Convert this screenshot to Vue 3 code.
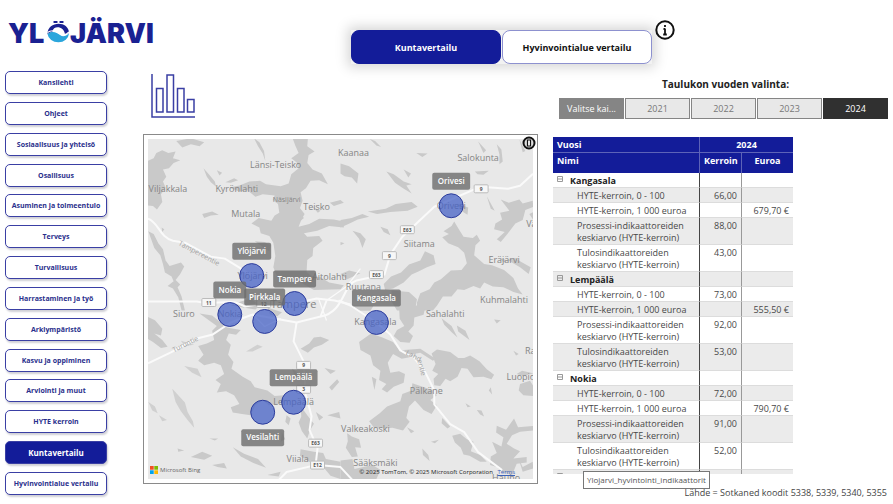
<script setup>
import { ref } from 'vue'

const pages = [
  'Kansilehti', 'Ohjeet', 'Sosiaalisuus ja yhtelsö', 'Osallisuus', 'Asuminen ja toimeentulo',
  'Terveys', 'Turvallisuus', 'Harrastaminen ja työ', 'Arkiympäristö', 'Kasvu ja oppiminen',
  'Arviointi ja muut', 'HYTE kerroin', 'Kuntavertailu', 'Hyvinvointialue vertailu',
]
const activePage = ref('Kuntavertailu')

const years = ['Valitse kai...', '2021', '2022', '2023', '2024']
const activeYear = ref('2024')

const makeGroup = (name, score, euros, process, result) => ({
  name,
  rows: [
    { label: ['HYTE-kerroin, 0 - 100'], score },
    { label: ['HYTE-kerroin, 1 000 euroa'], euros },
    { label: ['Prosessi-indikaattoreiden', 'keskiarvo (HYTE-kerroin)'], score: process },
    { label: ['Tulosindikaattoreiden', 'keskiarvo (HYTE-kerroin)'], score: result },
  ],
})
const groups = [
  makeGroup('Kangasala', '66,00', '679,70 €', '88,00', '43,00'),
  makeGroup('Lempäälä', '73,00', '555,50 €', '92,00', '53,00'),
  makeGroup('Nokia', '72,00', '790,70 €', '91,00', '52,00'),
]

const places = [
  ['Kaanaa', 353, 155], ['Länsi-Teisko', 275, 167], ['Salokunta', 478, 160], ['Viljakkala', 167, 191],
  ['Kyrönlahti', 236, 191], ['Teisko', 316, 209], ['Mutala', 245, 216], ['Siitama', 419, 246],
  ['Eräjärvi', 504, 262], ['Aitolahti', 329, 279], ['Ruutana', 363, 289], ['Kuhmalahti', 504, 302],
  ['Siuro', 183, 317], ['Sahalahti', 445, 317], ['Pälkäne', 426, 394], ['Valkeakoski', 365, 432],
  ['Viiala', 297, 462], ['Sääksmäki', 375, 466], ['Hauho', 506, 481], ['Luopioinen', 530, 380],
  ['Rautajärvi', 546, 354], ['Väihö', 538, 226],
]
const shields = [
  ['9', 481, 188], ['E63', 407, 229], ['9', 389, 255], ['E63', 376, 274], ['11', 208, 302],
  ['12', 263, 303], ['9', 303, 365], ['3', 303, 389], ['E63', 315, 443], ['E12', 317, 465],
]
const cities = [
  { name: 'Orivesi', x: 451, y: 205, lx: 451, ly: 180, w: 38, tx: 451, ty: 208 },
  { name: 'Ylöjärvi', x: 251, y: 275, lx: 251, ly: 250, w: 39, tx: 252, ty: 278 },
  { name: 'Tampere', x: 294, y: 303, lx: 294, ly: 278, w: 43, tx: 293, ty: 307, big: true },
  { name: 'Nokia', x: 229, y: 314, lx: 229, ly: 289, w: 33, tx: 229, ty: 317 },
  { name: 'Pirkkala', x: 264, y: 321, lx: 264, ly: 296, w: 41, tx: 264, ty: 325, hidden: true },
  { name: 'Kangasala', x: 376, y: 322, lx: 376, ly: 297, w: 49, tx: 375, ty: 325 },
  { name: 'Lempäälä', x: 293, y: 402, lx: 293, ly: 377, w: 48, tx: 293, ty: 405 },
  { name: 'Vesilahti', x: 262, y: 412, lx: 262, ly: 437, w: 43, tx: 262, ty: 416, hidden: true },
]
</script>

<template>
  <div class="page">
    <header class="top">
      <svg class="logo" viewBox="0 0 152 28" role="img" aria-label="Ylöjärvi">
        <g class="wordmark">
          <text x="0" y="23">YL</text>
          <text x="62" y="23">JÄRVI</text>
        </g>
        <path d="M39.500 14 C39.500 0.500 61 0.500 61 13 L57 14.500 C56 5.500 45 5.500 44.500 11.500 Z" fill="#1a2192" />
        <path d="M39.500 14 C44 10 49 12.500 52 15 C55 17.500 58 16 61 13.500 A10.800 9.500 0 0 1 39.500 14 Z" fill="#2ba6dc" />
        <path d="M39.500 12.500 C44 9 49 11.500 52 13.500 C55 15.500 58 15 61 12" fill="none" stroke="#fff" stroke-width="1.200" />
        <rect x="45.500" y="1" width="4" height="2" rx=".5" fill="#1a2192" />
        <rect x="51.500" y="1" width="4" height="2" rx=".5" fill="#1a2192" />
      </svg>
      <div class="tabs">
        <button type="button" class="tab active">Kuntavertailu</button>
        <button type="button" class="tab">Hyvinvointialue vertailu</button>
      </div>
      <button type="button" class="info" aria-label="Info">
        <svg viewBox="0 0 20 20">
          <circle cx="10" cy="10" r="8.700" fill="#fff" stroke="#111" stroke-width="2" />
          <path d="M10 8.500V14M8.500 9H10M8.200 14.500H11.800M10 5V7" stroke="#111" stroke-width="1.800" />
        </svg>
      </button>
    </header>

    <div class="body">
      <nav class="side">
        <button
          v-for="p in pages" :key="p" type="button" class="nav"
          :class="{ active: p === activePage }" @click="activePage = p"
        >{{ p }}</button>
      </nav>

      <main class="center">
        <svg class="bars" viewBox="0 0 46 46" fill="none" stroke="#3a3fa4" stroke-width="1.500">
          <path d="M2 1V44H45" />
          <path d="M6.500 15.500H13V39H6.500ZM17 2H23.500V39H17ZM27.500 15.500H34V39H27.500ZM37.500 26.500H44V39H37.500Z" />
        </svg>
        <div class="frame">
          <svg class="map" viewBox="147 137 386 343" preserveAspectRatio="xMidYMid slice" role="img" aria-label="Kuntakartta">
            <rect x="147" y="137" width="386" height="343" fill="#e8e8e8" />
            <g class="water">
              <g transform="translate(140 130) scale(.33333)">
                <path d="M20 90L38 82 46 66 64 58 82 66 104 62 96 82 118 88 98 96 84 112 66 116 76 138 66 152 74 170 60 190 64 214 48 236 36 226 20 224Z" />
                <path d="M106 30L150 22 190 34 176 46 150 40 124 50ZM340 22L352 46 366 68 374 90 370 60 356 34Z" />
                <path d="M456 22L502 22 500 46 522 62 504 72 500 96 516 116 544 128 562 160 536 148 510 150 496 172 480 184 486 210 478 232 492 250 482 268 474 288 506 280 536 264 580 266 610 272 610 290 566 286 530 300 490 308 500 318 536 316 546 330 518 352 516 376 500 388 498 424 512 436 540 440 566 456 610 464 600 476 520 478 470 450 410 440 398 410 404 376 398 336 386 316 360 308 356 290 332 278 354 262 392 270 402 254 416 246 412 220 396 208 402 194 366 190 344 198 320 178 294 182 266 170 296 164 326 152 358 150 376 160 420 166 444 158 452 130 474 112 470 96 452 82 474 66 464 44Z" />
                <path d="M188 112L204 130 222 152 226 168 210 154 198 138ZM228 118L244 126 236 134ZM254 154L280 142 292 148 270 156ZM184 250L214 242 234 252 210 254 190 262ZM342 332L372 334 390 344 386 362 368 350Z" />
                <path d="M22 302L38 310 52 338 66 356 74 390 86 406 120 396 130 408 118 430 104 448 118 462 110 470 122 498 132 540 122 540 112 500 96 474 80 466 98 452 92 438 72 426 66 400 58 374 40 352Z" />
                <path d="M62 290L70 296 64 304ZM568 216L600 208 610 216 580 226ZM480 250L490 262 480 270ZM516 228L540 240 532 246Z" />
              </g>
              <g transform="translate(340 130) scale(.33333)">
                <path d="M0 98L26 106 54 128 50 158 34 140 12 136 0 128ZM138 122L160 130 190 152 214 160 198 164 214 188 188 172 164 156ZM190 116L212 128 204 140ZM82 242L136 234 166 220 214 214 232 228 202 240 150 244 110 250Z" />
                <path d="M0 268L34 262 66 250 86 258 52 266 24 280 0 290ZM36 300L60 308 76 326 66 352 56 324ZM120 288L142 296 150 314 130 304ZM0 334L12 338 0 344ZM88 24L104 30 122 48 108 44ZM228 66L262 68 246 78ZM414 32L438 58 430 66ZM470 40L484 56 488 92 478 100 478 70ZM404 122L446 120 430 132 412 130ZM538 26L556 60 548 64Z" />
                <path d="M440 196L464 240 452 234ZM482 206L506 216 538 206 548 218 578 210 580 228 556 238 548 268 526 278 502 310 482 334 470 326 494 304 462 296 466 278 486 266 480 246 508 240Z" />
                <path d="M334 286L342 272 356 296 370 318 398 322 410 312 420 330 406 344 402 374 432 400 456 404 492 418 520 442 534 474 548 492 520 484 490 470 458 468 432 456 420 474 400 466 372 478 352 476 334 498 308 498 290 526 278 540 230 540 230 516 240 488 268 476 282 456 302 446 332 420 364 418 380 398 372 366 354 350 324 338 306 320 326 310 310 302Z" />
                <path d="M254 362L280 374 286 400 260 410 236 422 214 432 190 456 158 474 134 478 130 460 152 438 182 426 206 402 240 390ZM502 388L526 382 540 392 572 410 566 430 540 410ZM350 218L384 230 382 252 366 242ZM568 250L580 244V268ZM480 382L504 390 490 396Z" />
                <path d="M154 480L206 484 230 506 224 540 170 540 152 510ZM0 430L26 420 60 428 20 446Z" />
              </g>
              <g transform="translate(140 305) scale(.33333)">
                <path d="M20 34L42 44 64 70 60 90 40 84 64 104 80 124 60 128 36 110 20 100Z" />
                <path d="M176 24L214 30 258 66 300 74 286 88 264 84 256 104 270 118 262 148 278 170 272 190 306 214 330 228 342 246 380 256 402 272 430 270 426 294 384 300 366 284 344 300 330 330 304 326 276 322 270 306 296 296 280 270 256 258 228 262 240 236 224 224 250 206 240 180 220 172 190 180 172 166 188 148 172 122 198 114 220 104 214 76 228 62Z" />
                <path d="M130 182L170 190 182 216 154 202ZM94 250L112 270 132 292 140 320 156 348 160 368 140 344 120 318 104 290ZM22 290L42 304 50 324 34 316ZM54 330L78 344 64 348ZM120 106L160 118 132 122ZM316 138L350 118 366 124 336 138Z" fill-opacity=".8" />
                <path d="M480 130L506 114 520 96 540 94 566 104 544 118 520 126 502 142ZM454 190L474 204 466 222ZM552 188L586 196 570 206ZM566 246L590 222 596 230 574 256ZM526 320L548 336 536 346ZM560 330L596 320 600 340ZM438 330L450 340 444 360 434 350ZM424 382L434 402 420 410Z" />
                <path d="M480 302L500 330 520 356 508 376 500 400 484 378 474 352 482 334ZM276 426L310 446 352 462 376 488 338 474 300 454ZM150 456L184 440 214 452 190 464ZM110 430L130 436 112 440ZM206 400L232 400 222 406ZM214 480L250 474 258 490 230 486Z" />
                <path d="M480 432L520 440 548 444 556 462 600 470 600 522 570 512 548 486 512 474 478 452ZM380 510L420 500 414 514ZM270 0L344 12 358 0 330 -20 300 -12ZM380 6L424 20 410 32 388 28Z" />
              </g>
              <g transform="translate(340 305) scale(.33333)">
                <path d="M176 0L256 0 250 28 222 36 220 60 204 78 218 92 208 112 180 110 160 92 170 74 192 62 178 40ZM40 0H100L90 16 50 16Z" />
                <path d="M56 110L92 84 126 96 158 110 176 132 206 138 208 156 184 160 158 146 142 172 150 202 176 198 194 206 190 232 160 244 140 262 124 252 138 236 116 224 120 196 98 180 90 150 60 134ZM94 214L108 222 102 254Z" />
                <path d="M216 234L276 254 290 270 270 284 290 300 274 326 250 314 224 286 206 304 198 338 208 350 188 376 156 368 130 370 100 366 86 348 118 324 140 304 180 288 186 266 214 256Z" />
                <path d="M274 144L290 132 330 140 354 158 372 158 390 150 418 168 440 192 462 208 454 222 430 214 400 216 382 190 364 188 352 214 330 228 316 220 300 242 282 240 280 220 294 206 276 196 286 176Z" />
                <path d="M190 134L240 130 286 160 278 166 240 142 208 148ZM304 38L334 62 352 96 336 82 312 58ZM350 60L376 76 388 104 372 92 354 78ZM462 42L482 44 470 54ZM520 136L536 146 528 150Z" />
                <path d="M452 246L456 268 446 256ZM410 314L424 316 432 334 420 328ZM376 294L392 304 382 306ZM306 338L330 364 322 370 304 354ZM246 430L264 450 268 468 248 450ZM272 410L296 404 284 414Z" />
                <path d="M336 392L360 386 380 402 400 410 392 438 420 450 440 470 420 470 388 452 370 448 362 428 344 412Z" />
                <path d="M470 362L498 374 522 340 534 366 580 362 580 376 540 380 516 390 500 416 522 430 540 438 520 460 560 456 560 472 530 476 516 510 484 500 470 486 450 480 452 454 470 444 456 410 484 424 490 396 468 382ZM536 462L548 486 578 470 580 490 548 500ZM540 236L570 226 580 242V272L550 270 536 256ZM530 206L546 196 580 204 550 212Z" />
                <path d="M20 384L34 394 56 402 62 428 44 426 52 454 34 456 16 428 22 408ZM0 466L36 462 42 492 96 480 120 494 108 522H0ZM200 366L222 378 212 384Z" />
              </g>
            </g>
            <g class="roads">
              <path d="M147 218C158 222 158 236 172 240L184 242 210 256 224 258 242 269 251 275" />
              <path d="M147 301H196C214 306 228 296 244 306L263 303 294 303 316 298 334 300 350 304" />
              <path d="M147 363L170 352 196 338 212 334 230 322 252 314 274 318 296 322 320 316 326 300" />
              <path d="M296 322L293 341 303 361 305 394 311 416 309 430 317 448 315 465 286 472 278 480" />
              <path d="M320 316C344 312 342 284 356 280L384 274 390 254 402 236 434 206 480 186 508 188 520 185 533 173" />
              <path d="M317 465L340 467 352 480M338 300L350 305 376 322 390 334 400 350 414 358 424 370 434 390 434 404 450 424 464 432 478 452 502 470" />
              <path d="M252 314L264 326 280 318M326 300L346 286 360 268M318 298L326 320" stroke-width="1.200" />
            </g>
            <g class="road-names">
              <text x="177" y="244" transform="rotate(28 177 244)">Tampereentie</text>
              <text x="173" y="352" transform="rotate(-26 173 352)">Turuntie</text>
              <text x="405" y="354" transform="rotate(28 405 354)">Lahd</text>
              <text x="417" y="360" transform="rotate(75 417 360)">entie</text>
            </g>
            <g class="shields">
              <template v-for="([n, x, y], i) in shields" :key="i">
                <rect :x="x - 7" :y="y - 4" width="14" height="8" rx="1" />
                <text :x="x" :y="y + 2">{{ n }}</text>
              </template>
            </g>
            <g class="places">
              <text v-for="[n, x, y] in places" :key="n" :x="x" :y="y">{{ n }}</text>
              <text class="lake" x="286" y="201">Näsijärvi</text>
              <template v-for="c in cities" :key="c.name">
                <text v-if="!c.hidden" :class="{ big: c.big }" :x="c.tx" :y="c.ty">{{ c.name }}</text>
              </template>
            </g>
            <g class="markers">
              <circle v-for="c in cities" :key="c.name" :cx="c.x" :cy="c.y" r="12" />
            </g>
            <g class="tags">
              <template v-for="c in cities" :key="c.name">
                <rect :x="c.lx - c.w / 2" :y="c.ly - 8" :width="c.w" height="17" rx="2" />
                <text :x="c.lx" :y="c.ly + 3">{{ c.name }}</text>
              </template>
            </g>
          </svg>
          <div class="bing">
            <svg viewBox="0 0 8 8">
              <path fill="#f25022" d="M0 0h3.700v3.700H0z" /><path fill="#7fba00" d="M4.300 0H8v3.700H4.300z" />
              <path fill="#00a4ef" d="M0 4.300h3.700V8H0z" /><path fill="#ffb900" d="M4.300 4.300H8V8H4.300z" />
            </svg>
            <span>Microsoft Bing</span>
          </div>
          <div class="copyright">© 2025 TomTom, © 2025 Microsoft Corporation <a href="#terms">Terms</a></div>
          <button type="button" class="map-info" aria-label="Kartan tiedot">
            <svg viewBox="0 0 14 14">
              <circle cx="7" cy="7" r="5.500" fill="#ddd" stroke="#111" stroke-width="2" />
              <path d="M5.500 4V10H8.500V4Z" fill="#fff" stroke="#111" stroke-width="1.200" />
            </svg>
          </button>
        </div>
      </main>

      <section class="right">
        <h2>Taulukon vuoden valinta:</h2>
        <div class="years">
          <button
            v-for="(y, i) in years" :key="y" type="button"
            :class="{ all: i === 0, active: y === activeYear }" @click="activeYear = y"
          >{{ y }}</button>
        </div>
        <div class="scroll">
          <table>
            <colgroup><col class="c-name"><col class="c-score"><col class="c-euro"></colgroup>
            <thead>
              <tr><th class="left">Vuosi</th><th colspan="2">2024</th></tr>
              <tr class="second"><th class="left">Nimi</th><th>Kerroin</th><th>Euroa</th></tr>
            </thead>
            <tbody>
              <template v-for="g in groups" :key="g.name">
                <tr>
                  <th scope="row" class="group">
                    <button type="button" class="toggle" :aria-label="g.name">
                      <svg viewBox="0 0 7 7" fill="none" stroke="#999"><path d="M.5 .5H5.500V5.500H.5ZM1 3H5" /></svg>
                    </button>{{ g.name }}
                  </th>
                  <td></td><td></td>
                </tr>
                <tr v-for="(r, i) in g.rows" :key="i">
                  <td class="label"><div v-for="l in r.label" :key="l">{{ l }}</div></td>
                  <td>{{ r.score }}</td>
                  <td>{{ r.euros }}</td>
                </tr>
              </template>
              <tr>
                <th scope="row" class="group">
                  <button type="button" class="toggle" aria-label="Laajenna">
                    <svg viewBox="0 0 7 7" fill="none" stroke="#999"><path d="M.5 .5H5.500V5.500H.5ZM1 3H5" /></svg>
                  </button>
                </th>
                <td></td><td></td>
              </tr>
            </tbody>
          </table>
        </div>
        <p class="source">Lähde = Sotkaned koodit 5338, 5339, 5340, 5355</p>
        <div class="tooltip" role="tooltip">Ylojarvi_hyvintointi_indikaattorit</div>
      </section>
    </div>
  </div>
</template>

<style>
body { background: #fff; }
</style>

<style scoped>
.page {
  height: 100vh;
  min-height: 500px;
  display: flex;
  flex-direction: column;
  font-family: "Open Sans", "Noto Sans", sans-serif;
  font-size: 9px;
  line-height: 12px;
  color: #333;
  box-sizing: border-box;
}
.page * { box-sizing: border-box; }
button { font-family: inherit; margin: 0; padding: 0; cursor: pointer; white-space: nowrap; }
svg { display: block; }

.top { display: flex; align-items: flex-start; padding: 20px 0 0 8px; height: 71px; flex: none; }
.logo { width: 152px; height: 28px; margin-right: 191px; overflow: visible; }
.wordmark { font: 900 27px Inter, sans-serif; fill: #1a2192; }
.tabs { display: flex; gap: 1px; margin-top: 10px; box-shadow: 0 0 12px 3px #d4d4d4; background: #f2f2f2; }
.tab { width: 150px; height: 34px; border: 1px solid #8d91cf; border-radius: 8px; background: #fff; color: #111; font-size: 9px; font-weight: 700; }
.tab.active { background: #131c99; border-color: #131c99; color: #fff; }
.info { width: 20px; height: 20px; margin-left: 3px; border: 0; background: none; }

.body { flex: 1; min-height: 0; display: grid; grid-template-columns: 123px minmax(0, 395fr) minmax(0, 335fr); column-gap: 15px; padding: 0 5px; }

.side { display: flex; flex-direction: column; justify-content: space-between; padding-bottom: 9px; width: 102px; }
.nav { height: 23px; border: 1px solid #3a3fa4; border-radius: 5px; background: #fff; color: #2a2f8c; font-size: 7px; font-weight: 700; box-shadow: 1px 2px 2px #d0d0d6; }
.nav.active { background: #131c99; color: #fff; font-size: 8px; }

.center { display: flex; flex-direction: column; padding: 2px 0 20px; min-height: 0; }
.bars { width: 46px; height: 46px; margin: 0 0 15px 7px; flex: none; }
.frame { position: relative; flex: 1; min-height: 0; border: 1px solid #8a8a8a; padding: 4px; }
.map { width: 100%; height: 100%; }
.water { fill: #c9c9c9; }
.roads { fill: none; stroke: #fafafa; stroke-width: 2; stroke-linejoin: round; }
.road-names { font-size: 7px; fill: #a0a0a0; }
.shields rect { fill: #f7f7f7; stroke: #bbb; }
.shields text { font-size: 5px; font-weight: 700; fill: #555; text-anchor: middle; }
.places text { font-size: 9px; fill: #858585; text-anchor: middle; }
.places .lake { font-size: 7px; }
.places .big { font-size: 11px; }
.markers circle { fill: #4661c6; fill-opacity: .75; stroke: #2c3c9c; stroke-width: 1; }
.tags rect { fill: #6b6b6b; fill-opacity: .8; }
.tags text { font-size: 8px; font-weight: 600; fill: #fff; text-anchor: middle; }
.bing { position: absolute; left: 6px; bottom: 9px; display: flex; align-items: center; gap: 2px; font-size: 6px; line-height: 8px; color: #666; }
.bing svg { width: 8px; height: 8px; }
.copyright { position: absolute; right: 22px; bottom: 6px; font-size: 6px; line-height: 10px; color: #222; white-space: nowrap; }
.copyright a { color: #3d63b8; margin-left: 3px; }
.map-info { position: absolute; top: 1px; right: 1px; width: 14px; height: 14px; border: 0; background: none; }

.right { position: relative; display: flex; flex-direction: column; min-height: 0; padding-bottom: 5px; }
h2 { margin: 6px 0 0; padding-left: 10px; font-size: 10px; line-height: 14px; font-weight: 700; text-align: center; color: #222; }
.years { display: grid; grid-template-columns: repeat(5, minmax(0, 1fr)); gap: 1px; margin: 7px 0 18px 6px; }
.years button { height: 21px; border: 1px solid #858585; background: #e8e8e8; color: #777; font-size: 9px; }
.years .all { background: #858585; color: #fff; }
.years .active { background: #303030; border-color: #303030; color: #fff; }

.scroll { flex: 1; min-height: 0; overflow: hidden; }
table { border-collapse: separate; border-spacing: 0; table-layout: fixed; width: 240px; }
.c-name { width: 147px; }
.c-score { width: 42px; }
.c-euro { width: 51px; }
thead th { background: #131c99; color: #fff; height: 16px; padding: 2px 4px 1px; font-weight: 700; border-bottom: 1px solid #5d63b8; text-align: center; }
thead th:not(:last-child) { border-right: 1px solid #5d63b8; }
thead .left { text-align: left; }
thead .second th { height: 20px; padding: 1px 4px 6px; border-bottom: 0; }
tbody th, tbody td { height: 15px; padding: 2px 4px 0; border-bottom: 1px solid #dcdcdc; text-align: right; vertical-align: top; white-space: nowrap; color: #484848; }
tbody tr:nth-child(even) > * { background: #ebebeb; }
tbody tr > :nth-child(1) { border-right: 1px solid #444; text-align: left; }
tbody tr > :nth-child(2) { border-right: 1px solid #999; }
tbody .label { padding-left: 24px; }
tbody .group { font-weight: 700; color: #222; }
.toggle { width: 7px; height: 7px; margin-right: 6px; border: 0; background: none; vertical-align: 1px; line-height: 0; }
.toggle svg { width: 7px; height: 7px; }
.source { flex: none; margin: 13px 1px 0 0; text-align: right; color: #444; }
.tooltip { position: absolute; left: 30px; bottom: 15px; padding: 2px 3px; border: 1px solid #777; background: #fff; color: #555; font-size: 8px; white-space: nowrap; }
</style>
